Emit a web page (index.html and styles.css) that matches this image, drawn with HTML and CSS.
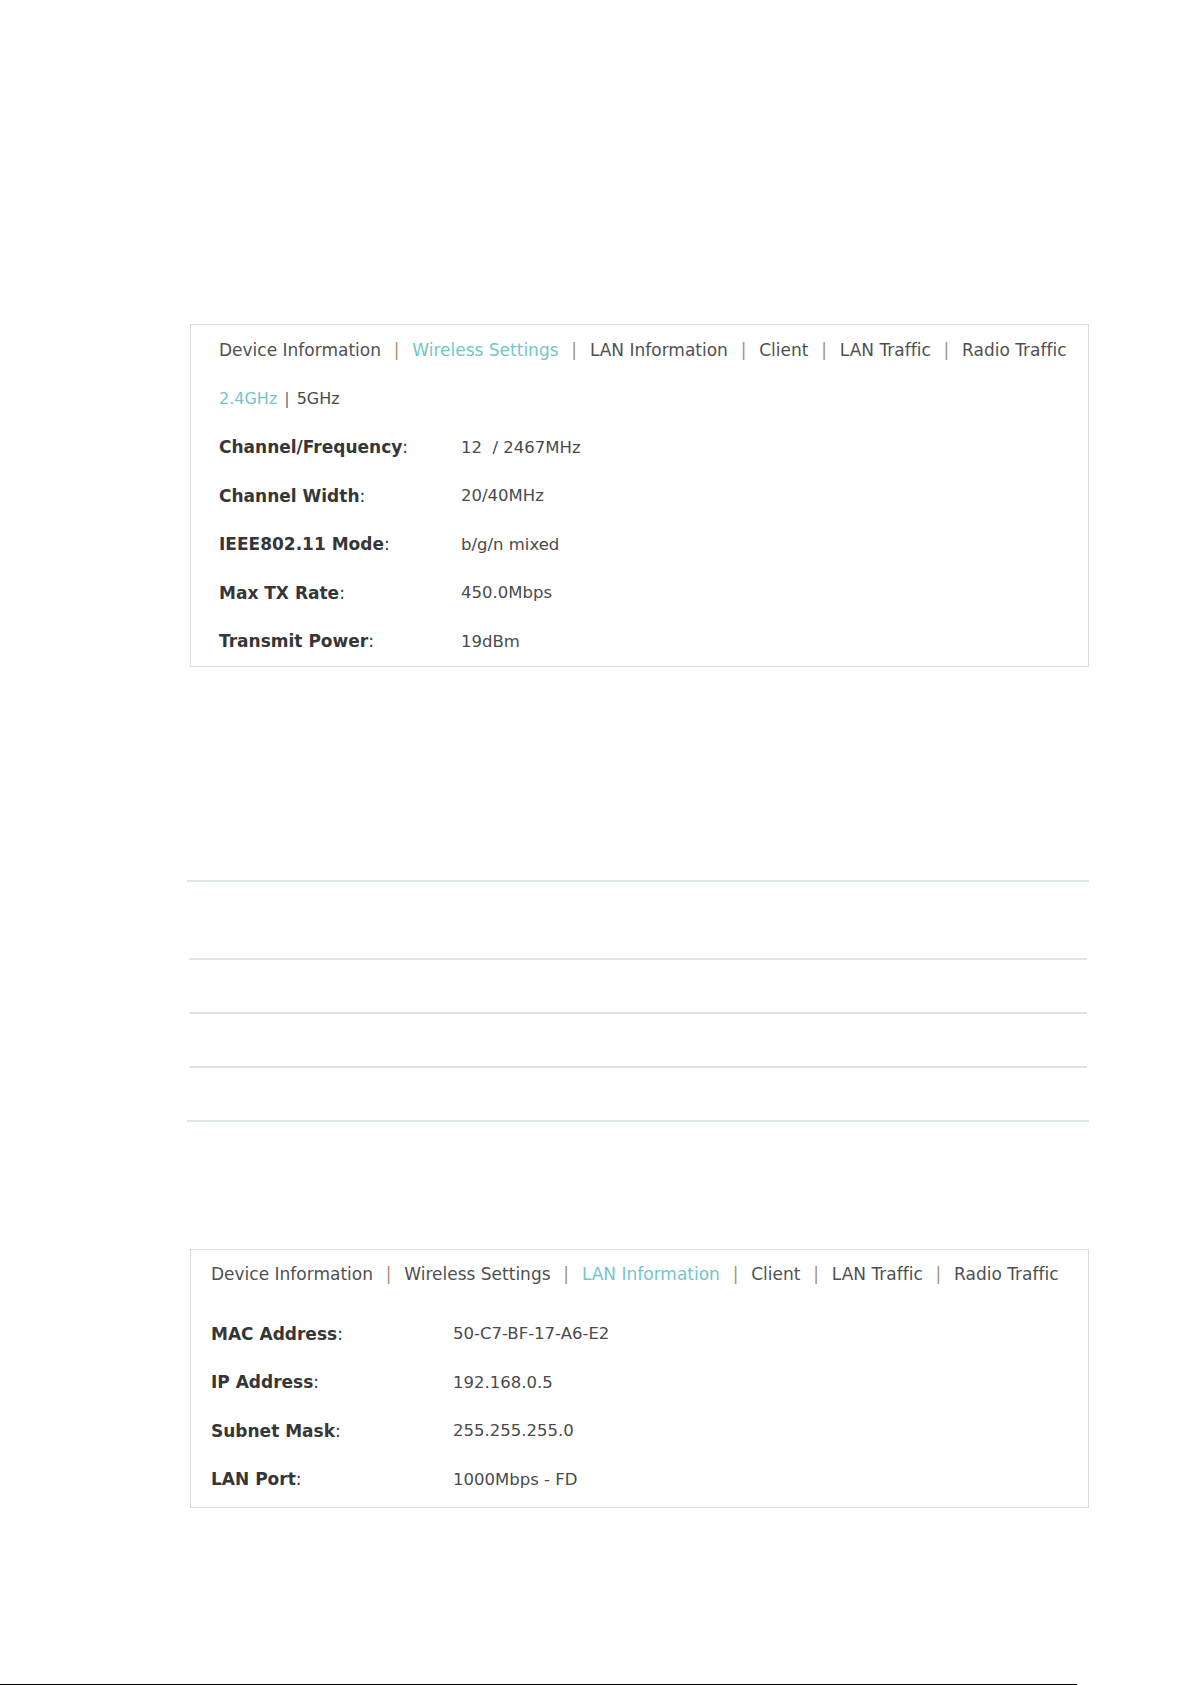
FILE: index.html
```html
<!DOCTYPE html>
<html lang="en">
<head>
<meta charset="utf-8">
<title>Status</title>
<link rel="stylesheet" href="styles.css">
</head>
<body>
<div class="page">

  <section class="panel panel-wireless">
    <nav class="tabs">
      <span class="tab">Device Information</span><span class="sep">|</span>
      <span class="tab active">Wireless Settings</span><span class="sep">|</span>
      <span class="tab">LAN Information</span><span class="sep">|</span>
      <span class="tab">Client</span><span class="sep">|</span>
      <span class="tab">LAN Traffic</span><span class="sep">|</span>
      <span class="tab">Radio Traffic</span>
    </nav>
    <div class="bands">
      <span class="band active">2.4GHz</span><span class="band-sep">|</span><span class="band">5GHz</span>
    </div>
    <div class="row"><span class="label">Channel/Frequency<span class="colon">:</span></span><span class="value">12&nbsp; / 2467MHz</span></div>
    <div class="row"><span class="label">Channel Width<span class="colon">:</span></span><span class="value">20/40MHz</span></div>
    <div class="row"><span class="label">IEEE802.11 Mode<span class="colon">:</span></span><span class="value">b/g/n mixed</span></div>
    <div class="row"><span class="label">Max TX Rate<span class="colon">:</span></span><span class="value">450.0Mbps</span></div>
    <div class="row"><span class="label">Transmit Power<span class="colon">:</span></span><span class="value">19dBm</span></div>
  </section>

  <div class="grid">
    <div class="grid-head"></div>
    <div class="grid-row"></div>
    <div class="grid-row"></div>
    <div class="grid-row last"></div>
  </div>

  <section class="panel panel-lan">
    <nav class="tabs">
      <span class="tab">Device Information</span><span class="sep">|</span>
      <span class="tab">Wireless Settings</span><span class="sep">|</span>
      <span class="tab active">LAN Information</span><span class="sep">|</span>
      <span class="tab">Client</span><span class="sep">|</span>
      <span class="tab">LAN Traffic</span><span class="sep">|</span>
      <span class="tab">Radio Traffic</span>
    </nav>
    <div class="rows">
      <div class="row"><span class="label">MAC Address<span class="colon">:</span></span><span class="value">50-C7-BF-17-A6-E2</span></div>
      <div class="row"><span class="label">IP Address<span class="colon">:</span></span><span class="value">192.168.0.5</span></div>
      <div class="row"><span class="label">Subnet Mask<span class="colon">:</span></span><span class="value">255.255.255.0</span></div>
      <div class="row"><span class="label">LAN Port<span class="colon">:</span></span><span class="value">1000Mbps - FD</span></div>
    </div>
  </section>

  <div class="footer-rule"></div>
</div>
</body>
</html>
```
FILE: styles.css
```css
* {
  box-sizing: border-box;
}

html, body {
  margin: 0;
  padding: 0;
  background: #ffffff;
}

body {
  font-family: "DejaVu Sans", Verdana, sans-serif;
  font-variant-ligatures: none;
  color: #4a4a4a;
  width: 1192px;
  height: 1685px;
  overflow: hidden;
}

.page {
  display: flex;
  flex-direction: column;
  padding-top: 324px;
}

/* Status panels */
.panel {
  margin-left: 190px;
  width: 899px;
  border: 1px solid #dcdcdc;
  background: #fff;
}

.panel-wireless {
  padding: 0 28px;
}

.panel-lan {
  margin-top: 127px;
  padding: 0 20px 3px;
}

.tabs {
  display: flex;
  align-items: center;
  height: 49px;
  font-size: 17px;
  color: #505050;
  white-space: nowrap;
}

.panel-lan .tabs {
  height: 48px;
}

.tab.active {
  color: #72c6cc;
}

.tab-wide {
  letter-spacing: 0.3px;
}

.sep {
  margin: 0 12.8px;
  color: #a8916f;
}

.bands {
  display: flex;
  align-items: center;
  height: 49px;
  font-size: 16px;
  color: #4a4a4a;
}

.band.active {
  color: #72c6cc;
}

.band-sep {
  margin: 0 7px;
  color: #62707c;
}

.rows {
  padding-top: 12px;
}

.row {
  display: flex;
  align-items: center;
  height: 48.5px;
}

.label {
  width: 242px;
  flex: none;
  font-size: 17px;
  font-weight: bold;
  color: #363636;
}

.colon {
  font-weight: normal;
}

.value {
  font-size: 16.5px;
  color: #4a4a4a;
  white-space: pre;
}

/* Empty list table between the panels */
.grid {
  margin-top: 213px;
  margin-left: 187px;
  width: 902px;
  border-top: 2px solid #dce6e9;
  border-bottom: 2px solid #dce6e9;
}

.grid-head {
  height: 78px;
  margin: 0 2px;
  border-bottom: 2px solid #dce6e9;
}

.grid-row {
  height: 54px;
  margin: 0 2px;
  border-bottom: 2px solid #dce6e9;
}

.grid-row.last {
  height: 52px;
  border-bottom: none;
}

.footer-rule {
  margin-top: 176px;
  width: 1077px;
  height: 1px;
  flex: none;
  background: #000;
}
```
